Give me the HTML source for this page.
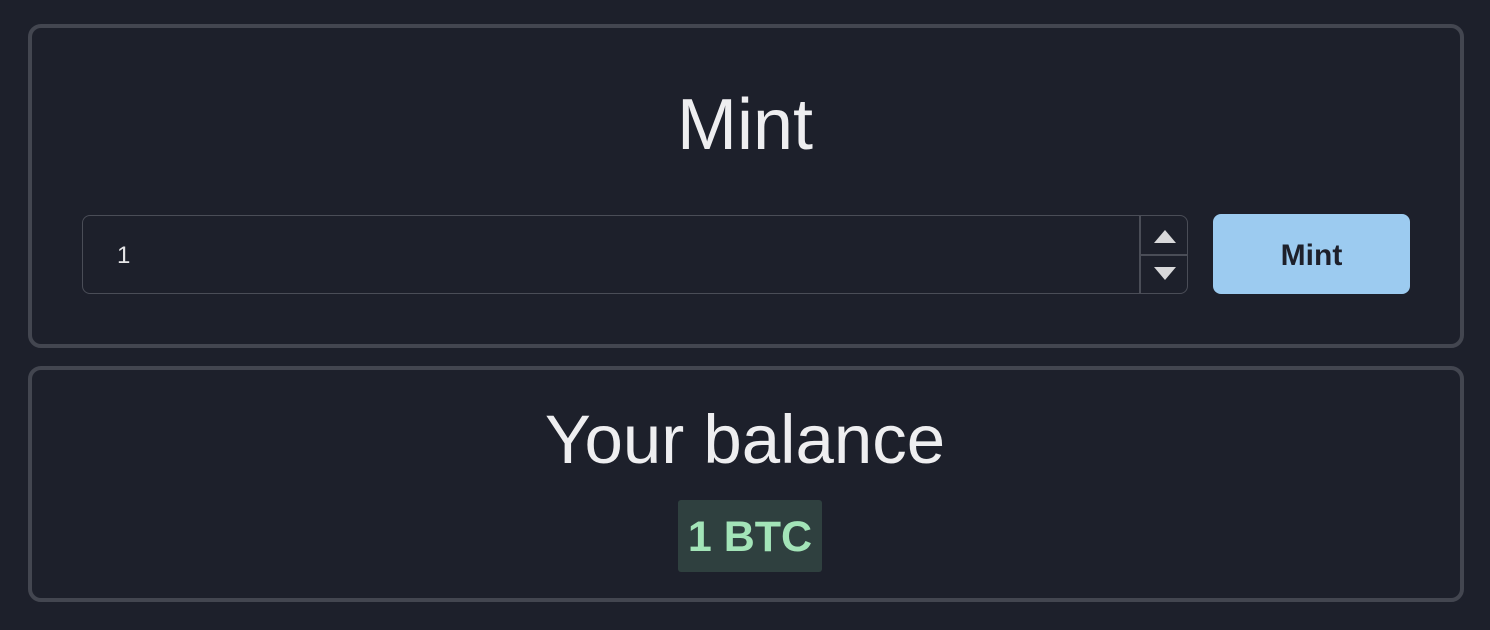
<!DOCTYPE html>
<html><head><style>
body{margin:0;background:#1d202b;width:1490px;height:630px;position:relative;font-family:"Liberation Sans",sans-serif;overflow:hidden}
.card{position:absolute;left:28px;width:1428px;border:4px solid #434650;border-radius:13px;box-sizing:content-box}
.t{position:absolute;left:0;right:0;text-align:center;color:#eeeef0;font-size:72px;line-height:1}
.inp{position:absolute;left:82px;top:215px;width:1104px;height:77px;border:1.5px solid #4a4d57;border-radius:8px}
.btn{position:absolute;left:1213px;top:214px;width:197px;height:80px;background:#9ccbf0;border-radius:8px;color:#1d202b;font-weight:bold;font-size:30px;text-align:center;line-height:83px}
.badge{position:absolute;left:678px;top:500px;width:144px;height:72px;background:#2f403f;border-radius:3px;color:#a3e4b8;font-weight:bold;font-size:43px;text-align:center;line-height:74px}
</style></head><body>
<div class="card" style="top:24px;height:316px"></div>
<div class="card" style="top:366px;height:228px"></div>
<div class="t" style="top:89px">Mint</div>
<div class="inp">
<div style="position:absolute;left:34px;top:26px;color:#e6e6e8;font-size:24px">1</div>
<div style="position:absolute;left:1056px;top:0;bottom:0;width:1.5px;background:#4a4d57"></div>
<div style="position:absolute;left:1056px;right:0;top:38px;height:1.5px;background:#4a4d57"></div>
<svg style="position:absolute;left:1070px;top:12px" width="24" height="16"><path d="M1 15L12 2L23 15Z" fill="#d8d8da"/></svg>
<svg style="position:absolute;left:1070px;top:50px" width="24" height="16"><path d="M1 1L12 14L23 1Z" fill="#d8d8da"/></svg>
</div>
<div class="btn">Mint</div>
<div class="t" style="top:405px;font-size:69px">Your balance</div>
<div class="badge">1 BTC</div>
</body></html>
